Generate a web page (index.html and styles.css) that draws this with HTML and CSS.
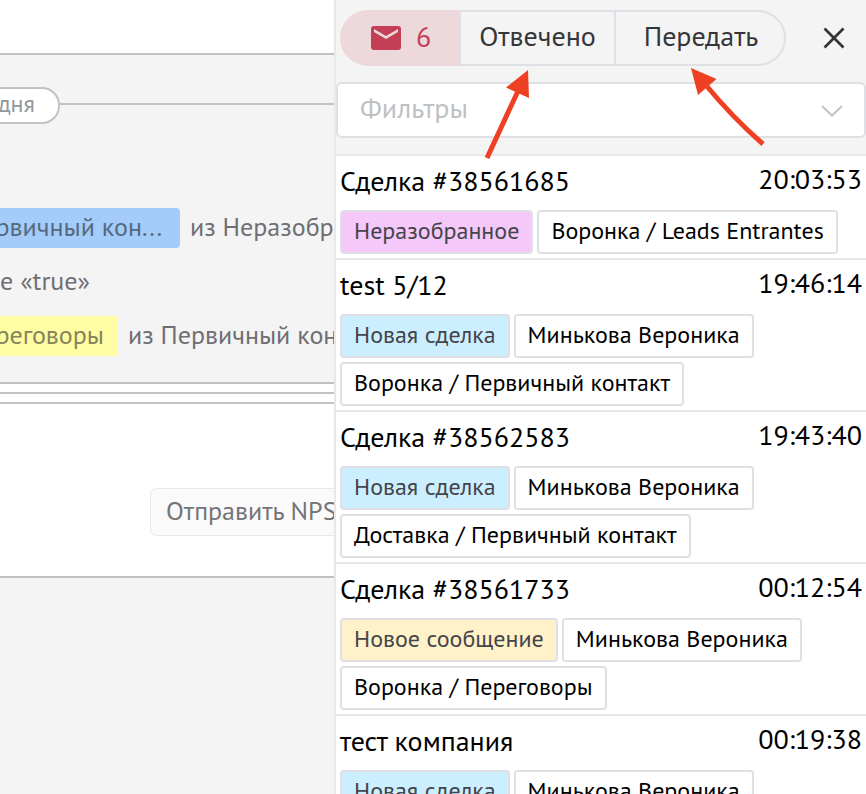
FILE: index.html
```html
<!DOCTYPE html>
<html lang="ru">
<head>
    <meta charset="UTF-8">
    <meta name="viewport" content="width=device-width, initial-scale=1.0">
    <title>Сделки</title>
    <link rel="stylesheet" href="styles.css">
</head>
<body>
    <div class="page">
        <main class="card">
            <div class="card-header"></div>

            <section class="feed">
                <div class="day">
                    <span class="day-label">дня</span>
                </div>
                <div class="event">
                    <span class="stage stage-blue"><span>рвичный кон...</span></span>
                    <span>из Неразобр</span>
                </div>
                <div class="event">
                    <span>е «true»</span>
                </div>
                <div class="event">
                    <span class="stage stage-yellow"><span>реговоры</span></span>
                    <span>из Первичный кон</span>
                </div>
            </section>

            <div class="strip"></div>
            <div class="strip"></div>
            <section class="compose">
                <button type="button" class="nps-button">Отправить NPS</button>
            </section>
        </main>

        <aside class="inbox">
            <div class="toolbar">
                <div class="actions">
                    <button type="button" class="action unread">
                        <svg width="30" height="24" viewBox="0 0 30 24">
                            <rect width="30" height="24" rx="3" fill="#c23f55"/>
                            <path d="M3 3 L15 10 L27 3 V6 L15 13 L3 6 Z" fill="#edd8db"/>
                        </svg>
                        <span>6</span>
                    </button>
                    <button type="button" class="action answered">Отвечено</button>
                    <button type="button" class="action transfer">Передать</button>
                </div>
                <button type="button" class="close" aria-label="Закрыть">
                    <svg width="22" height="22" viewBox="0 0 22 22">
                        <path d="M1.500 1.500 L20.500 20.500 M20.500 1.500 L1.500 20.500" stroke="#313337" stroke-width="2.600" fill="none"/>
                    </svg>
                </button>
            </div>

            <div class="filter">
                <select class="filter-select" aria-label="Фильтры">
                    <option>Фильтры</option>
                </select>
                <svg class="filter-arrow" width="22" height="12" viewBox="0 0 22 12">
                    <path d="M1 1 L11 10.500 L21 1" stroke="#c4c4c6" stroke-width="2" fill="none"/>
                </svg>
            </div>

            <div class="deals">
                <article class="deal">
                    <div class="deal-head"><span>Сделка #38561685</span><time>20:03:53</time></div>
                    <div class="tags">
                        <span class="tag tag-pink">Неразобранное</span>
                        <span class="tag">Воронка / Leads Entrantes</span>
                    </div>
                </article>
                <article class="deal">
                    <div class="deal-head"><span>test 5/12</span><time>19:46:14</time></div>
                    <div class="tags">
                        <span class="tag tag-blue">Новая сделка</span>
                        <span class="tag">Минькова Вероника</span>
                        <span class="tag">Воронка / Первичный контакт</span>
                    </div>
                </article>
                <article class="deal">
                    <div class="deal-head"><span>Сделка #38562583</span><time>19:43:40</time></div>
                    <div class="tags">
                        <span class="tag tag-blue">Новая сделка</span>
                        <span class="tag">Минькова Вероника</span>
                        <span class="tag">Доставка / Первичный контакт</span>
                    </div>
                </article>
                <article class="deal">
                    <div class="deal-head"><span>Сделка #38561733</span><time>00:12:54</time></div>
                    <div class="tags">
                        <span class="tag tag-yellow">Новое сообщение</span>
                        <span class="tag">Минькова Вероника</span>
                        <span class="tag">Воронка / Переговоры</span>
                    </div>
                </article>
                <article class="deal">
                    <div class="deal-head"><span>тест компания</span><time>00:19:38</time></div>
                    <div class="tags">
                        <span class="tag tag-blue">Новая сделка</span>
                        <span class="tag">Минькова Вероника</span>
                    </div>
                </article>
            </div>

            <!-- pointers to the two action buttons -->
            <svg class="pointers" width="320" height="100" viewBox="0 0 320 100">
                <g fill="#ee4023">
                    <path d="M68 10 L46 27.500 L69 38 Z"/>
                    <path d="M231 8 L256.500 19 L238 35 Z"/>
                </g>
                <g fill="none" stroke="#ee4023" stroke-width="5">
                    <path d="M58 31 L27 98"/>
                    <path d="M245 24 Q273 58 303 84"/>
                </g>
            </svg>
        </aside>
    </div>
</body>
</html>
```
FILE: styles.css
```css
* {
    box-sizing: border-box;
}
body {
    margin: 0;
    font-family: "PT Sans", "Noto Sans", sans-serif;
    background-color: #f4f4f4;
}
button, select {
    font-family: inherit;
}
.page {
    display: grid;
    grid-template-columns: minmax(0, 1fr) 532px;
    height: 100vh;
    overflow: hidden;
}

/* left side */
.card {
    overflow: hidden;
    color: #6e6e73;
    font-size: 26px;
    white-space: nowrap;
}
.card-header {
    height: 55px;
    background-color: #fff;
    border-bottom: 2px solid #c2c2c2;
}
.feed {
    display: flex;
    flex-direction: column;
    gap: 14px;
    padding: 32px 0 26px;
    border-bottom: 2px solid #c2c2c2;
}
.day {
    display: flex;
    align-items: center;
    height: 37px;
    margin-bottom: 70px;
}
.day::after {
    content: "";
    flex: 1;
    height: 2px;
    margin-bottom: 4px;
    background-color: #c2c2c2;
}
.day-label {
    display: flex;
    align-items: center;
    justify-content: flex-end;
    width: 60px;
    height: 37px;
    padding: 0 23px 4px 0;
    background-color: #fff;
    border: 2px solid #c2c2c2;
    border-left: none;
    border-radius: 0 18px 18px 0;
    color: #92989b;
    font-size: 24px;
}
.event {
    display: flex;
    gap: 10px;
    height: 40px;
    line-height: 38px;
}
.stage {
    display: flex;
    justify-content: flex-end;
    flex: none;
    border-radius: 0 4px 4px 0;
    overflow: hidden;
}
.stage-blue {
    width: 180px;
    padding-right: 18px;
    background-color: #a4ccfa;
    color: #56697e;
}
.stage-yellow {
    width: 118px;
    padding-right: 14px;
    background-color: #fffda3;
    color: #85845c;
}
.strip {
    height: 10px;
    background-color: #fff;
    border-bottom: 2px solid #c2c2c2;
}
.compose {
    height: 174px;
    padding: 84px 0 0 150px;
    background-color: #fff;
    border-bottom: 2px solid #c2c2c2;
}
.nps-button {
    display: block;
    height: 48px;
    padding: 0 15px 4px;
    background-color: #fafafa;
    border: 1px solid #e8e8e8;
    border-radius: 6px;
    color: #747478;
    font-size: 26px;
    white-space: nowrap;
}

/* right side */
.inbox {
    position: relative;
    border-left: 2px solid #e8e8e8;
    background-color: #f4f4f4;
    overflow: hidden;
}
.toolbar {
    display: flex;
    align-items: center;
    justify-content: space-between;
    padding: 10px 21px 16px 4px;
}
.actions {
    display: flex;
    height: 56px;
}
.action {
    padding: 0 0 6px;
    background-color: #f4f4f4;
    border: 2px solid #dfdfe6;
    color: #35363a;
    font-size: 28px;
}
.unread {
    display: flex;
    align-items: center;
    gap: 15px;
    width: 119px;
    padding: 0 0 0 31px;
    background-color: #edd8db;
    border: none;
    border-radius: 28px 0 0 28px;
    color: #c23f55;
}
.unread span {
    padding-bottom: 4px;
}
.answered {
    width: 157px;
}
.transfer {
    width: 170px;
    padding-left: 2px;
    border-left: none;
    border-radius: 0 28px 28px 0;
}
.close {
    display: flex;
    padding: 0;
    background: none;
    border: none;
}
.filter {
    position: relative;
}
.filter-select {
    display: block;
    width: 100%;
    height: 56px;
    padding: 0 22px 6px;
    background-color: #fff;
    border: 2px solid #dfdfe6;
    border-radius: 6px;
    color: #c0c0c2;
    font-size: 28px;
    appearance: none;
}
.filter-arrow {
    position: absolute;
    top: 23px;
    right: 23px;
    pointer-events: none;
}
.deals {
    margin-top: 16px;
    background-color: #fff;
    border-top: 2px solid #e8e8e8;
    color: #000;
}
.deal {
    padding: 0 4px 4px;
    border-bottom: 2px solid #e8e8e8;
}
.deal-head {
    display: flex;
    justify-content: space-between;
    height: 54px;
    font-size: 28px;
    line-height: 50px;
}
.deal-head time {
    line-height: 46px;
}
.tags {
    display: flex;
    flex-wrap: wrap;
    gap: 4px;
}
.tag {
    height: 44px;
    padding: 0 12px;
    background-color: #fff;
    border: 2px solid #dfdfe6;
    border-radius: 4px;
    font-size: 24px;
    line-height: 38px;
    white-space: nowrap;
}
.tag-pink {
    background-color: #f5c8fa;
    color: #44454b;
}
.tag-blue {
    background-color: #ccefff;
    color: #44454b;
}
.tag-yellow {
    background-color: #fff1c8;
    color: #44454b;
}
.pointers {
    position: absolute;
    top: 60px;
    left: 124px;
    pointer-events: none;
}
```
